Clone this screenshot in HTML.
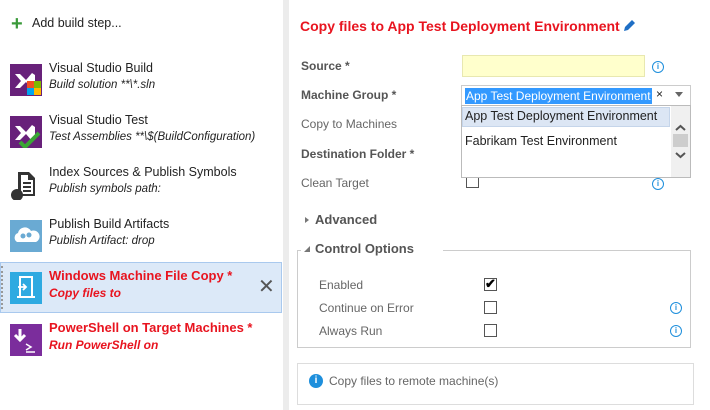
<!DOCTYPE html>
<html><head><style>
*{margin:0;padding:0;box-sizing:border-box}
body{width:710px;height:410px;background:#fff;font-family:"Segoe UI","Liberation Sans",sans-serif;font-size:12px;color:#222;position:relative;overflow:hidden}
.a{position:absolute;white-space:nowrap}
.t{font-size:12.5px;color:#222}
.s{font-size:11.5px;font-style:italic;color:#222}
.red{color:#e8141f;font-weight:bold}
.lbl{font-size:12px;color:#666}
.b{font-weight:bold;color:#555}
.ic{position:absolute;width:32px;height:32px}
.info{position:absolute;width:12px;height:12px;border:1.3px solid #1e8fdc;border-radius:50%;color:#1e8fdc;font-size:8px;line-height:9px;text-align:center;font-weight:bold}
.cb{position:absolute;width:13px;height:13px;border:1px solid #555;background:#fff}
</style></head><body>
<div class="a" style="left:11px;top:16px;color:#3a9a3a;font-size:20px;font-weight:bold;line-height:16px">+</div>
<div class="a t" style="left:32px;top:16px">Add build step...</div>

<svg class="ic" style="left:10px;top:64px" viewBox="0 0 32 32"><rect width="32" height="32" fill="#68217a"/><path d="M5 10l5 0 6 6 6-7 3 2v12l-3 2-6-7-6 6H5l6-7z" fill="#fff"/><rect x="17" y="17" width="7" height="7" fill="#f25022"/><rect x="24" y="17" width="7" height="7" fill="#7fba00"/><rect x="17" y="24" width="7" height="7" fill="#00a4ef"/><rect x="24" y="24" width="7" height="7" fill="#ffb900"/></svg>
<div class="a t" style="left:49px;top:61px">Visual Studio Build</div>
<div class="a s" style="left:49px;top:79px">Build solution **\*.sln</div>

<svg class="ic" style="left:10px;top:116px" viewBox="0 0 32 32"><rect width="32" height="32" fill="#68217a"/><path d="M5 10l5 0 6 6 6-7 3 2v12l-3 2-6-7-6 6H5l6-7z" fill="#fff"/><path d="M10 26l5 5 14-14" stroke="#3aa635" stroke-width="4" fill="none"/></svg>
<div class="a t" style="left:49px;top:113px">Visual Studio Test</div>
<div class="a s" style="left:49px;top:131px">Test Assemblies **\$(BuildConfiguration)</div>

<svg class="ic" style="left:10px;top:168px" viewBox="0 0 32 32"><path d="M8 4h11l6 6v18H8z" fill="#333"/><path d="M11 7h7v5h5v14H11z" fill="#fff"/><rect x="13" y="14" width="8" height="2" fill="#333"/><rect x="13" y="18" width="8" height="2" fill="#333"/><rect x="13" y="22" width="8" height="2" fill="#333"/><circle cx="7" cy="27" r="6" fill="#333"/></svg>
<div class="a t" style="left:49px;top:165px">Index Sources &amp; Publish Symbols</div>
<div class="a s" style="left:49px;top:183px">Publish symbols path:</div>

<svg class="ic" style="left:10px;top:220px" viewBox="0 0 32 32"><rect width="32" height="32" fill="#6aaad3"/><path d="M7 22a5 5 0 0 1 1-9 7 7 0 0 1 13-2 6 6 0 0 1 5 11z" fill="#fff"/><circle cx="13" cy="16" r="2.5" fill="#6aaad3"/><circle cx="19" cy="15" r="2.5" fill="#6aaad3"/></svg>
<div class="a t" style="left:49px;top:217px">Publish Build Artifacts</div>
<div class="a s" style="left:49px;top:235px">Publish Artifact: drop</div>

<div class="a" style="left:0;top:262px;width:282px;height:51px;background:#dce9f8;border:1px solid #a9c9ee"></div>
<div class="a" style="left:1px;top:266px;width:3px;height:43px;border-left:2px dotted #999"></div>
<svg class="ic" style="left:10px;top:272px" viewBox="0 0 32 32"><rect width="32" height="32" fill="#2eaae1"/><path d="M10 5h12v20H10z" fill="none" stroke="#fff" stroke-width="2"/><path d="M7 25h18" stroke="#fff" stroke-width="2"/><path d="M8 15h8m-3-3 3 3-3 3" stroke="#fff" stroke-width="1.8" fill="none"/></svg>
<div class="a red" style="left:49px;top:268px;font-size:13px">Windows Machine File Copy *</div>
<div class="a red" style="left:49px;top:286px;font-size:12px;font-style:italic">Copy files to</div>
<div class="a" style="left:258px;top:277px;font-size:20px;color:#555;line-height:20px">✕</div>

<svg class="ic" style="left:10px;top:324px" viewBox="0 0 32 32"><rect width="32" height="32" fill="#7b2d9c"/><path d="M10 5v11m-5-5 5 5 5-5" stroke="#fff" stroke-width="3" fill="none"/><path d="M16 20l5 3-5 3M16 28h9" stroke="#fff" stroke-width="1.5" fill="none"/></svg>
<div class="a red" style="left:49px;top:320px;font-size:13px">PowerShell on Target Machines *</div>
<div class="a red" style="left:49px;top:338px;font-size:12px;font-style:italic">Run PowerShell on</div>

<div class="a" style="left:283px;top:0;width:6px;height:410px;background:#ececec"></div>

<div class="a red" style="left:300px;top:18px;font-size:14px">Copy files to App Test Deployment Environment</div>
<svg class="a" style="left:622px;top:19px" width="14" height="14" viewBox="0 0 14 14"><path d="M2 12l1-4 7-7 3 3-7 7z" fill="#1f6fc5"/></svg>

<div class="a b" style="left:301px;top:59px">Source *</div>
<div class="a" style="left:462px;top:55px;width:183px;height:22px;background:#ffffcc;border:1px solid #e8e8b0"></div>
<div class="info" style="left:652px;top:61px">i</div>

<div class="a b" style="left:301px;top:88px">Machine Group *</div>
<div class="a" style="left:461px;top:85px;width:230px;height:21px;border:1px solid #ccc"></div>
<div class="a" style="left:465px;top:88px;background:#3399ff;color:#fff;font-size:12px;padding:0 1px;line-height:16px">App Test Deployment Environment</div>
<div class="a" style="left:656px;top:87px;font-size:12px">×</div>
<div class="a" style="left:675px;top:92px;border:4px solid transparent;border-top:5px solid #666"></div>

<div class="a lbl" style="left:301px;top:117px">Copy to Machines</div>
<div class="a b" style="left:301px;top:147px">Destination Folder *</div>
<div class="a lbl" style="left:301px;top:176px">Clean Target</div>
<div class="cb" style="left:466px;top:175px"></div>
<div class="info" style="left:652px;top:178px">i</div>

<div class="a" style="left:461px;top:105px;width:230px;height:73px;border:1px solid #bbb;background:#fff"></div>
<div class="a" style="left:462px;top:107px;width:208px;height:20px;background:#dce6f4;border:1px solid #c5d5ea"></div>
<div class="a" style="left:465px;top:109px;font-size:12.5px">App Test Deployment Environment</div>
<div class="a" style="left:465px;top:134px;font-size:12.5px">Fabrikam Test Environment</div>
<div class="a" style="left:671px;top:106px;width:19px;height:71px;background:#f0f0f0"></div>
<div class="a" style="left:673px;top:134px;width:15px;height:13px;background:#cdcdcd"></div>
<svg class="a" style="left:673px;top:122px" width="15" height="40" viewBox="0 0 15 40"><path d="M3 8l4.5-4 4.5 4M3 31l4.5 4 4.5-4" stroke="#555" stroke-width="2" fill="none"/></svg>

<div class="a" style="left:305px;top:217px;border:3px solid transparent;border-left:4px solid #777"></div>
<div class="a" style="left:315px;top:212px;font-size:13px;font-weight:bold;color:#555">Advanced</div>

<div class="a" style="left:297px;top:250px;width:394px;height:98px;border:1px solid #ccc"></div>
<div class="a" style="left:301px;top:240px;width:142px;height:16px;background:#fff"></div>
<div class="a" style="left:304px;top:246px;border:3px solid transparent;border-right:3.5px solid #777;border-bottom:3.5px solid #777"></div>
<div class="a" style="left:315px;top:241px;font-size:13px;font-weight:bold;color:#555">Control Options</div>

<div class="a lbl" style="left:319px;top:278px">Enabled</div>
<div class="cb" style="left:484px;top:278px"></div>
<div class="a" style="left:485px;top:276px;font-size:13px;font-weight:bold;color:#000">✔</div>
<div class="a lbl" style="left:319px;top:301px">Continue on Error</div>
<div class="cb" style="left:484px;top:301px"></div>
<div class="info" style="left:670px;top:302px">i</div>
<div class="a lbl" style="left:319px;top:324px">Always Run</div>
<div class="cb" style="left:484px;top:324px"></div>
<div class="info" style="left:670px;top:325px">i</div>

<div class="a" style="left:297px;top:363px;width:397px;height:42px;border:1px solid #ddd"></div>
<div class="a" style="left:309px;top:374px;width:14px;height:14px;border-radius:50%;background:#1e8fdc;color:#fff;font-size:10px;font-weight:bold;text-align:center;line-height:14px">i</div>
<div class="a lbl" style="left:329px;top:374px">Copy files to remote machine(s)</div>
</body></html>
